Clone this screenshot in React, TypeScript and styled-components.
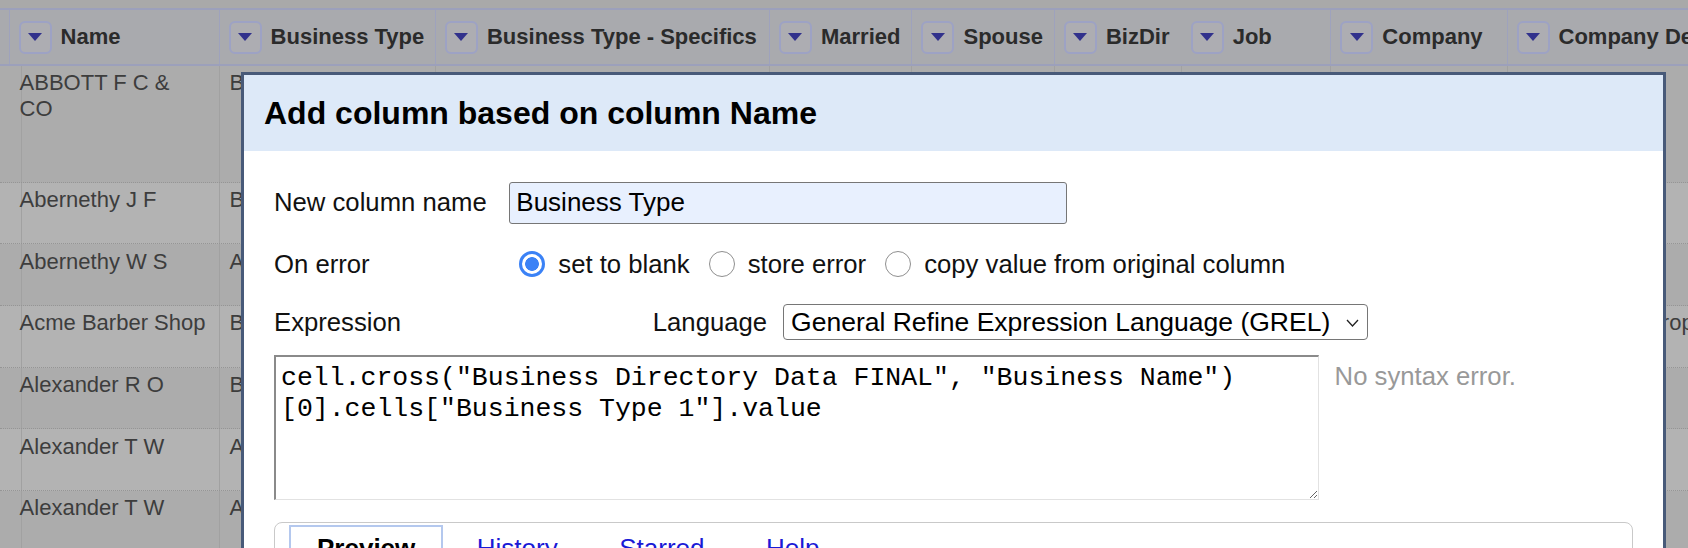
import React from "react";
import styled, { createGlobalStyle } from "styled-components";

const GlobalStyle = createGlobalStyle`
  html, body {
    margin: 0;
    padding: 0;
    height: 100%;
    overflow: hidden;
    background: #a9a9a9;
  }
  body {
    font-family: "Liberation Sans", Arial, sans-serif;
  }
  #root {
    position: relative;
    height: 100%;
  }
`;

const columns = [
  { key: "idx", label: "", width: 9.6 },
  { key: "name", label: "Name", width: 210 },
  { key: "type", label: "Business Type", width: 216.4 },
  { key: "spec", label: "Business Type - Specifics", width: 334 },
  { key: "married", label: "Married", width: 142.5 },
  { key: "spouse", label: "Spouse", width: 142.5 },
  { key: "bizdir", label: "BizDir", width: 126.7, plain: true },
  { key: "job", label: "Job", width: 149.7 },
  { key: "company", label: "Company", width: 176.2 },
  { key: "desc", label: "Company Description", width: 260 },
];

const gridTemplate = columns.map((c) => `${c.width}px`).join(" ");

const rows = [
  { name: "ABBOTT F C & CO", type: "Blacksmith", spec: "Blacksmith and wagon maker", desc: "", height: 116.7 },
  { name: "Abernethy J F", type: "Barber", spec: "", desc: "", height: 61.65 },
  { name: "Abernethy W S", type: "Attorney", spec: "", desc: "", height: 61.65 },
  { name: "Acme Barber Shop", type: "Barber", spec: "", desc: "Barber Shop Proprietor", height: 61.65 },
  { name: "Alexander R O", type: "Baker", spec: "", desc: "", height: 61.65 },
  { name: "Alexander T W", type: "Auto Repair", spec: "", desc: "", height: 61.65 },
  { name: "Alexander T W", type: "Auto Repair", spec: "", desc: "", height: 61.65 },
];

const Page = styled.div`
  position: relative;
  width: 1688px;
  height: 548px;
  overflow: hidden;
  padding-top: 8px;
  box-sizing: border-box;
`;

const HeaderRow = styled.div`
  display: grid;
  grid-template-columns: ${gridTemplate};
  height: 58px;
  box-sizing: border-box;
  border-top: 2px solid #9ca0bb;
  border-bottom: 2px solid #9ca0bb;
  background: #a9aaae;
`;

const HeaderCell = styled.div<{ $plain?: boolean }>`
  display: flex;
  align-items: center;
  gap: 9px;
  padding-left: 9px;
  border-right: 1px solid ${(p) => (p.$plain ? "transparent" : "#9ea2bd")};
  overflow: hidden;
  white-space: nowrap;
  font-size: 22px;
  font-weight: 700;
  color: #2b2b2b;
`;

const ColumnButton = styled.div`
  flex: 0 0 auto;
  width: 33px;
  height: 33px;
  box-sizing: border-box;
  border: 2px solid #9da2c4;
  border-radius: 6px;
  background: #adadb2;
  display: flex;
  align-items: center;
  justify-content: center;

  &::after {
    content: "";
    margin-top: -1px;
    border-left: 7px solid transparent;
    border-right: 7px solid transparent;
    border-top: 8px solid #31318c;
  }
`;

const BodyRow = styled.div<{ $odd: boolean }>`
  display: grid;
  grid-template-columns: ${gridTemplate};
  box-sizing: border-box;
  border-bottom: 1px dotted #959595;
  background: ${(p) => (p.$odd ? "#acacac" : "#b3b3b3")};
`;

const Cell = styled.div`
  padding: 4.4px 11px 0 10px;
  border-right: 1px solid #a1a1a1;
  overflow: hidden;
  font-size: 22px;
  line-height: 26px;
  color: #3d3d3d;
`;

/* dialog */

const Dialog = styled.div`
  position: absolute;
  left: 241px;
  top: 72px;
  width: 1425px;
  height: 620px;
  box-sizing: border-box;
  border: 3px solid #485a79;
  background: #ffffff;
  color: #111;
`;

const DialogHeader = styled.div`
  height: 76px;
  display: flex;
  align-items: center;
  padding-left: 20px;
  background: #dde9f8;
  font-size: 32px;
  font-weight: 700;
  color: #000;
`;

const DialogBody = styled.div`
  padding: 31px 30px 0 30px;
  font-size: 25.7px;
`;

const FormRow = styled.div<{ $height: number; $gap: number }>`
  display: grid;
  grid-template-columns: 235.3px 1fr;
  align-items: center;
  height: ${(p) => p.$height}px;
  margin-top: ${(p) => p.$gap}px;
`;

const Label = styled.div`
  white-space: nowrap;
`;

const TextInput = styled.input`
  width: 558px;
  height: 41.6px;
  box-sizing: border-box;
  border: 1.5px solid #767676;
  border-radius: 3px;
  background: #e8f0fe;
  padding: 0 6px;
  font-family: inherit;
  font-size: 26px;
  color: #000;
  outline: none;
`;

const RadioGroup = styled.div`
  display: flex;
  align-items: center;
`;

const RadioOption = styled.label`
  display: inline-flex;
  align-items: center;
  margin-right: 9px;
  white-space: nowrap;
`;

const Radio = styled.input`
  appearance: none;
  width: 26px;
  height: 26px;
  margin: 0 13px 0 10px;
  box-sizing: border-box;
  border-radius: 50%;
  border: 1.5px solid #8f8f8f;
  background: #fff;

  &:checked {
    border: 3px solid #3b82f6;
    background: radial-gradient(circle, #3b82f6 0 6.5px, #fff 7.2px);
  }
`;

const LanguageCell = styled.div`
  display: flex;
  align-items: center;
  padding-left: 143.5px;
  gap: 16px;
`;

const SelectWrap = styled.div`
  position: relative;
  width: 585px;
  height: 36.7px;
`;

const Select = styled.select`
  appearance: none;
  width: 100%;
  height: 100%;
  box-sizing: border-box;
  border: 1.5px solid #767676;
  border-radius: 4px;
  background: #fff;
  padding: 0 0 0 7px;
  font-family: inherit;
  font-size: 26.5px;
  color: #000;
  outline: none;
`;

const Chevron = styled.svg`
  position: absolute;
  right: 9px;
  top: 15px;
  pointer-events: none;
`;

const ExpressionRow = styled.div`
  display: flex;
  align-items: flex-start;
  gap: 16px;
  margin-top: 15px;
`;

const CodeArea = styled.textarea`
  width: 1044.6px;
  height: 144.3px;
  box-sizing: border-box;
  margin: 0;
  border-style: solid;
  border-width: 2px 1.5px 1.5px 2px;
  border-color: #8a8a8a #e2e2e2 #e2e2e2 #8a8a8a;
  padding: 6px 5px;
  font-family: "Liberation Mono", "Courier New", monospace;
  font-size: 26.5px;
  line-height: 31px;
  color: #000;
  outline: none;
`;

const Status = styled.div`
  padding-top: 7px;
  color: #999;
  white-space: nowrap;
`;

const Tabs = styled.div`
  margin-top: 22.4px;
  height: 80px;
  box-sizing: border-box;
  border: 1.5px solid #c9c9c9;
  border-radius: 8px;
  padding: 2px 14px 0;
  display: flex;
  align-items: flex-start;
`;

const Tab = styled.div<{ $active?: boolean }>`
  padding: 6px 26px;
  margin-right: 5.5px;
  border: 2px solid ${(p) => (p.$active ? "#b4c8ee" : "transparent")};
  border-bottom: none;
  font-size: 26px;
  font-weight: ${(p) => (p.$active ? 700 : 400)};
  color: ${(p) => (p.$active ? "#000" : "#1a1ad6")};
  white-space: nowrap;
`;

export default function App() {
  return (
    <Page>
      <GlobalStyle />
      <HeaderRow>
        {columns.map((c) => (
          <HeaderCell key={c.key} $plain={c.plain}>
            {c.label && (
              <>
                <ColumnButton />
                {c.label}
              </>
            )}
          </HeaderCell>
        ))}
      </HeaderRow>
      {rows.map((r, i) => (
        <BodyRow key={i} $odd={i % 2 === 0} style={{ height: r.height }}>
          <Cell />
          <Cell>{r.name}</Cell>
          <Cell>{r.type}</Cell>
          <Cell>{r.spec}</Cell>
          <Cell />
          <Cell />
          <Cell />
          <Cell />
          <Cell />
          <Cell style={{ whiteSpace: "nowrap" }}>{r.desc}</Cell>
        </BodyRow>
      ))}

      <Dialog>
        <DialogHeader>Add column based on column Name</DialogHeader>
        <DialogBody>
          <FormRow $height={41.6} $gap={0}>
            <Label>New column name</Label>
            <TextInput defaultValue="Business Type" />
          </FormRow>
          <FormRow $height={41.6} $gap={20}>
            <Label>On error</Label>
            <RadioGroup>
              <RadioOption>
                <Radio type="radio" name="onerror" defaultChecked />
                set to blank
              </RadioOption>
              <RadioOption>
                <Radio type="radio" name="onerror" />
                store error
              </RadioOption>
              <RadioOption>
                <Radio type="radio" name="onerror" />
                copy value from original column
              </RadioOption>
            </RadioGroup>
          </FormRow>
          <FormRow $height={36.7} $gap={18.5}>
            <Label>Expression</Label>
            <LanguageCell>
              <span>Language</span>
              <SelectWrap>
                <Select defaultValue="grel">
                  <option value="grel">General Refine Expression Language (GREL)</option>
                  <option value="clojure">Clojure</option>
                  <option value="jython">Python / Jython</option>
                </Select>
                <Chevron width="13" height="8" viewBox="0 0 13 8">
                  <path d="M1 1 L6.5 7 L12 1" fill="none" stroke="#222" strokeWidth="1.3" />
                </Chevron>
              </SelectWrap>
            </LanguageCell>
          </FormRow>
          <ExpressionRow>
            <CodeArea
              spellCheck={false}
              defaultValue={'cell.cross("Business Directory Data FINAL", "Business Name")[0].cells["Business Type 1"].value'}
            />
            <Status>No syntax error.</Status>
          </ExpressionRow>
          <Tabs>
            <Tab $active>Preview</Tab>
            <Tab>History</Tab>
            <Tab>Starred</Tab>
            <Tab>Help</Tab>
          </Tabs>
        </DialogBody>
      </Dialog>
    </Page>
  );
}
